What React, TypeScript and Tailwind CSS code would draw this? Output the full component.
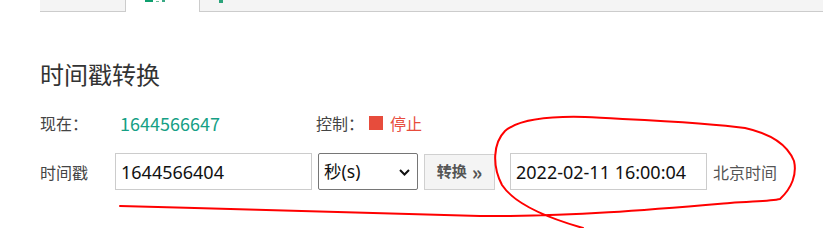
import { useState } from "react";

const Annotation = () => (
  <svg
    className="pointer-events-none absolute inset-0"
    width={823}
    height={228}
    viewBox="0 0 823 228"
    fill="none"
  >
    <path
      d="M120 206 C 250 209 390 214 480 216 C 570 217 660 209 730 203 C 760 201 772 201 780 199 C 792 188 797 174 794 161 C 788 146 772 134 745 128 C 705 122 640 120 585 117 C 548 116 518 120 505 131 C 493 143 492 166 502 185 C 515 205 548 218 583 228"
      stroke="#ff0000"
      strokeWidth={2}
      strokeLinecap="round"
      strokeLinejoin="round"
    />
  </svg>
);

// tab strip, scrolled so only its bottom edge is visible
const TabBar = () => (
  <div className="ml-[40px] flex h-[12px] overflow-hidden">
    <div className="w-[86px] border-b border-r border-[#ccc] bg-[#f4f4f4]" />
    <div className="flex w-[73px] items-start gap-[3px] bg-white pl-[19px]">
      <div className="h-[2px] w-[8px] bg-[#0e9f6e]" />
      <div className="mt-[1px] h-[1px] w-[3px] bg-[#6fbf9b]" />
      <div className="h-[2px] w-[3px] bg-[#3aa985]" />
    </div>
    <div className="flex-1 border-b border-l border-[#ccc] bg-[#f4f4f4] pl-[19px]">
      <div className="h-[3px] w-[4px] bg-[#2ba37a]" />
    </div>
  </div>
);

export default function App() {
  const [now] = useState("1644566647");
  const [ts, setTs] = useState("1644566404");
  const [unit, setUnit] = useState("s");
  const [date, setDate] = useState("2022-02-11 16:00:04");

  const inputFont = { fontFamily: '"Noto Sans", "Noto Sans CJK SC", sans-serif' };

  return (
    <div
      className="relative h-[228px] w-[823px] overflow-hidden bg-white text-[#444]"
      style={{ fontFamily: '"Noto Sans CJK SC", "Noto Sans", sans-serif' }}
    >
      <TabBar />

      <div className="pl-[40px]">
        <h2 className="mt-[44px] h-[36px] text-[24px] font-normal leading-[36px] text-[#333]">
          时间戳转换
        </h2>

        <div className="mt-[19px] flex h-[24px] items-center">
          <span className="w-[80px] text-[16px] leading-[24px]">现在：</span>
          <span className="w-[196px] text-[18px] leading-[24px] text-[#16a085]">{now}</span>
          <span className="w-[53px] text-[16px] leading-[24px]">控制：</span>
          <span className="h-[14px] w-[14px] bg-[#e74c3c]" />
          <button className="ml-[7px] text-[16px] leading-[24px] text-[#e74c3c]">停止</button>
        </div>

        <div className="mt-[18px] flex items-center">
          <span className="w-[75px] text-[16px]">时间戳</span>
          <input
            value={ts}
            onChange={(e) => setTs(e.target.value)}
            className="h-[37px] w-[197px] border border-[#ccc] px-[5px] text-[18px] text-[#111] outline-none"
            style={inputFont}
          />
          <div className="relative ml-[6px]">
            <select
              value={unit}
              onChange={(e) => setUnit(e.target.value)}
              className="h-[37px] w-[100px] appearance-none rounded-[2px] border border-[#767676] bg-white pl-[5px] text-[17.5px] text-[#111] outline-none"
              style={inputFont}
            >
              <option value="s">秒(s)</option>
              <option value="ms">毫秒(ms)</option>
            </select>
            <svg
              className="pointer-events-none absolute right-[8px] top-[16px]"
              width={11}
              height={7}
              viewBox="0 0 11 7"
              fill="none"
            >
              <path d="M1 1l4.5 4.5L10 1" stroke="#111" strokeWidth={2} />
            </svg>
          </div>
          <button className="ml-[6px] flex h-[36px] w-[71px] items-center justify-center gap-[5px] border border-[#d0d0d0] bg-[#f4f4f4] text-[15px] font-semibold text-[#555]">
            <span>转换</span>
            <span className="text-[20px] font-bold leading-none">»</span>
          </button>
          <input
            value={date}
            onChange={(e) => setDate(e.target.value)}
            className="ml-[15px] h-[37px] w-[197px] border border-[#ccc] px-[5px] text-[18px] text-[#111] outline-none"
            style={inputFont}
          />
          <span className="ml-[6px] text-[16px] text-[#555]">北京时间</span>
        </div>
      </div>

      <Annotation />
    </div>
  );
}
